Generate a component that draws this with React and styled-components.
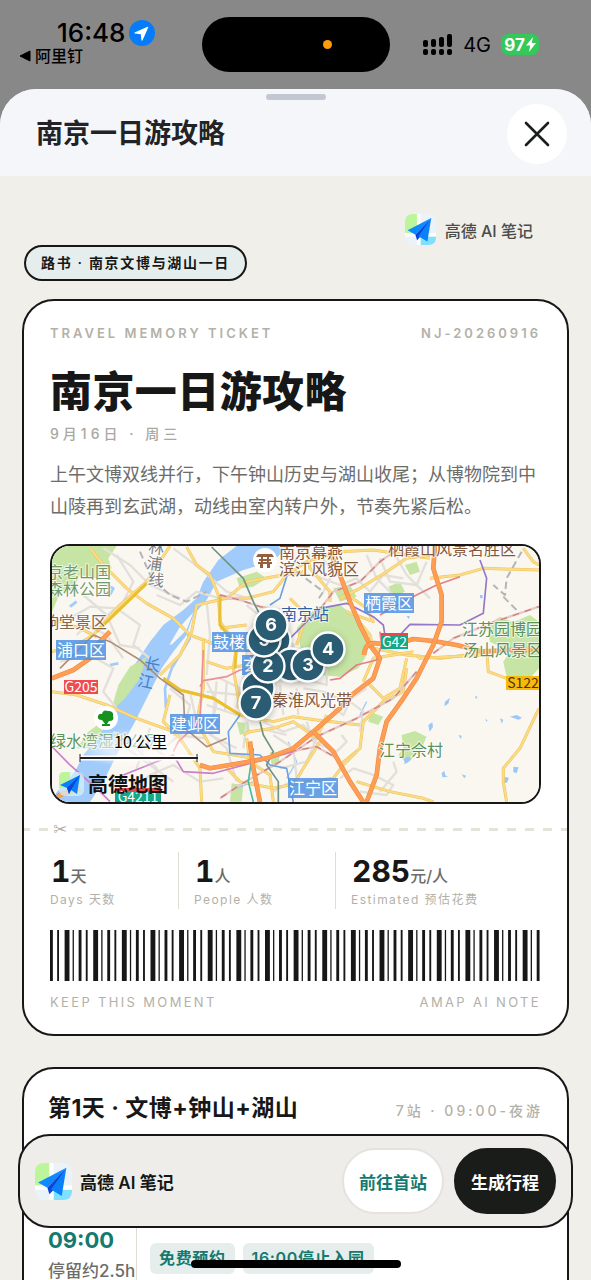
import React from 'react';
import styled, { createGlobalStyle } from 'styled-components';

const stats = [
  { value: '1', unit: '天', label: 'Days 天数' },
  { value: '1', unit: '人', label: 'People 人数' },
  { value: '285', unit: '元/人', label: 'Estimated 预估花费' },
];

export default function App() {
  return (
    <Screen>
      <GlobalStyle />
      <StatusBar />
      <Sheet>
        <SheetHeader>
          <Grabber />
          <SheetTitle>南京一日游攻略</SheetTitle>
          <CloseButton type="button" aria-label="关闭">
            <svg width="28" height="28" viewBox="0 0 28 28">
              <path
                d="M3 3 L25 25 M25 3 L3 25"
                stroke="#1c1d1f"
                strokeWidth="2.6"
                strokeLinecap="round"
              />
            </svg>
          </CloseButton>
        </SheetHeader>
        <Content>
          <BrandRow>
            <Logo size={31} />
            高德 AI 笔记
          </BrandRow>
          <Tag>路书 · 南京文博与湖山一日</Tag>
          <Ticket />
          <DayCard />
        </Content>
      </Sheet>
      <ActionBar>
        <Logo size={37} />
        <ActionName>高德 AI 笔记</ActionName>
        <ActionButton type="button">前往首站</ActionButton>
        <ActionButton type="button" $dark>
          生成行程
        </ActionButton>
      </ActionBar>
      <HomeIndicator />
    </Screen>
  );
}

function StatusBar() {
  return (
    <Status>
      <StatusLeft>
        <Clock>
          16:48
          <svg width="26" height="26" viewBox="0 0 26 26">
            <circle cx="13" cy="13" r="13" fill="#067cfb" />
            <path
              d="M18.6 6.8 L5.6 12.4 Q4.8 13.2 6 13.6 L11.8 14.2 L12.4 20 Q12.9 21.2 13.6 20.2 L19.2 7.4 Q19.3 6.6 18.6 6.8 Z"
              fill="#fff"
            />
          </svg>
        </Clock>
        <BackLink href="#">
          <svg width="12" height="12" viewBox="0 0 12 12">
            <path d="M11 1 V11 L1 6 Z" fill="#000" stroke="#000" strokeLinejoin="round" />
          </svg>
          阿里钉
        </BackLink>
      </StatusLeft>
      <Island>
        <RecordDot />
      </Island>
      <StatusRight>
        <svg width="30" height="21" viewBox="0 0 30 21">
          {[6, 5, 3, 0].map((top, i) => (
            <g key={i}>
              <rect x={i * 8} y={top} width="5" height={13 - top} rx="2" />
              <rect x={i * 8} y="15" width="5" height="6" rx="2" />
            </g>
          ))}
        </svg>
        4G
        <Battery>
          97
          <svg width="10" height="15" viewBox="0 0 10 15">
            <path d="M7 0 L0 8.5 H4.2 L3 15 L10 6 H5.8 Z" fill="#fff" />
          </svg>
        </Battery>
      </StatusRight>
    </Status>
  );
}

function Logo({ size }) {
  return (
    <svg width={size} height={size} viewBox="0 0 36 36" aria-hidden="true">
      <rect width="36" height="36" rx="9" fill="#eaf3f7" />
      <path d="M9 0 H14 V22 H0 V9 Q0 0 9 0 Z" fill="#bdf59b" />
      <path d="M18 26 H36 V27 Q36 36 27 36 H18 Z" fill="#7fe0ff" />
      <path d="M14 0 H18 V36 H14 Z M0 22 H36 V26 H0 Z" fill="#fff" />
      <path d="M30.5 4.5 L3 19 L12 24.2 Z" fill="#0b8bff" />
      <path d="M30.5 4.5 L12 24.2 L14 30.5 L17.5 26.8 Z" fill="#0a45d8" />
      <path d="M30.5 4.5 L15.6 25.8 L26 32 Z" fill="#0a80fb" />
    </svg>
  );
}

function Ticket() {
  return (
    <Card>
      <CapsRow $bold>
        <span>TRAVEL MEMORY TICKET</span>
        <span>NJ-20260916</span>
      </CapsRow>
      <TicketTitle>南京一日游攻略</TicketTitle>
      <TicketDate>9月16日 · 周三</TicketDate>
      <Summary>
        上午文博双线并行，下午钟山历史与湖山收尾；从博物院到中山陵再到玄武湖，动线由室内转户外，节奏先紧后松。
      </Summary>
      <MapFrame>
        <CityMap />
      </MapFrame>
      <TearLine>
        <Scissors>✂</Scissors>
      </TearLine>
      <Stats>
        {stats.map((stat) => (
          <Stat key={stat.label}>
            <StatValue>
              {stat.value}
              <StatUnit>{stat.unit}</StatUnit>
            </StatValue>
            <StatLabel>{stat.label}</StatLabel>
          </Stat>
        ))}
      </Stats>
      <Barcode />
      <CapsRow>
        <span>KEEP THIS MOMENT</span>
        <span>AMAP AI NOTE</span>
      </CapsRow>
    </Card>
  );
}

// every group of four bars repeats after 20 units
function Barcode() {
  const bars = [
    [0, 2],
    [5, 1.3],
    [10.2, 3.4],
    [15.8, 0.9],
  ];
  const groups = Array.from({ length: 18 }, (_, i) => i * 20);

  return (
    <BarcodeSvg viewBox="0 0 343 36" preserveAspectRatio="none">
      {groups.map((start) =>
        bars.map(([x, w]) => (
          <rect key={start + x} x={start + x} width={w} height="36" fill="#161716" />
        ))
      )}
    </BarcodeSvg>
  );
}

function DayCard() {
  return (
    <Card $day>
      <DayHeader>
        <DayTitle>第1天 · 文博+钟山+湖山</DayTitle>
        <DayMeta>7站 · 09:00-夜游</DayMeta>
      </DayHeader>
      <Stop>
        <StopTime>
          <Hour>09:00</Hour>
          <Stay>停留约2.5h</Stay>
        </StopTime>
        <StopBody>
          <Chip>免费预约</Chip>
          <Chip>16:00停止入园</Chip>
        </StopBody>
      </Stop>
    </Card>
  );
}

const parks = [
  'M36 33 H230 L205 70 L215 100 L170 130 L120 120 L100 160 L60 175 L36 230 Z',
  'M770 280 L830 215 L900 210 L940 240 L965 280 L990 330 L975 370 L955 400 L900 425 L840 420 L790 380 Z',
  'M1340 270 L1380 245 L1420 262 L1470 240 L1497 260 V400 L1470 430 L1400 425 L1390 380 L1410 350 L1350 320 Z',
  'M1085 600 L1125 588 L1160 605 L1140 650 L1100 685 L1075 660 L1090 640 Z',
  'M590 130 L650 110 L680 130 L640 155 L600 160 Z',
  'M880 160 L930 150 L950 185 L900 200 Z',
  'M990 530 L1030 545 L1015 570 L985 560 Z',
  'M1045 155 L1080 140 L1095 170 L1060 185 Z',
  'M1095 90 L1130 80 L1140 110 L1110 120 Z',
  'M575 745 L610 750 L605 800 H570 Z',
  'M590 560 L625 565 L630 590 L600 600 Z',
  'M145 590 L185 560 L190 600 L150 640 L110 640 Z',
  'M690 650 L720 655 L715 690 L695 690 Z',
];

const grayRoads = [
  'M90 250 L150 215 L230 220 L300 270 L280 330 L330 370',
  'M190 40 L270 90 L330 150 L420 190',
  'M230 60 L280 140 L250 200 L180 260',
  'M60 380 L150 360 L220 400 L190 470 L230 520',
  'M130 180 L200 240 L240 330 L300 340',
  'M110 300 L140 270 L200 300 L250 370',
  'M350 180 L420 210 L470 170 L540 190',
  'M400 40 L480 100 L560 170 L640 195',
  'M390 460 L450 510 L430 590 L370 640 L300 640',
  'M450 470 L470 560 L560 640 L590 740',
  'M500 440 L530 500 L510 600 L590 640',
  'M540 430 L600 460 L590 520',
  'M560 300 L620 350 L610 440 L650 500',
  'M500 200 L510 300 L500 420',
  'M250 790 L330 720 L400 690 L480 740 L550 730',
  'M220 590 L290 640 L350 700 L340 800',
  'M670 560 L730 590 L790 570 L830 610 L800 680 L720 700',
  'M700 600 L760 640 L770 730 L700 770',
  'M800 560 L820 620 L890 650 L920 620 L905 600',
  'M790 460 L850 470 L920 500 L980 460',
  'M850 500 L910 540 L930 500 L970 530 L960 590',
  'M820 120 L900 150 L950 130 L990 170 L1030 120 L1090 130',
  'M980 60 L1010 130 L1080 200',
  'M1020 70 L1050 140 L1130 150 L1160 80',
  'M1060 50 L1100 120 L1170 190',
  'M840 60 L880 110 L850 170',
  'M900 730 L940 700 L1000 720 L1060 750 L1040 780 L960 770',
  'M1020 770 L1070 710 L1060 680',
  'M780 430 L860 450 L860 400',
  'M620 210 L680 260 L760 330 L760 420',
  'M500 470 L600 480 M500 510 L590 540 M440 540 L530 560 M400 600 L500 610',
  'M530 440 L520 540 M560 440 L555 530 M620 560 L610 640 M660 580 L740 600',
  'M640 470 L740 480 L800 500 M720 450 L730 540 M770 460 L775 540',
  'M300 600 L380 670 M330 580 L290 700 M260 640 L400 740',
];

const yellowRoads = [
  'M36 350 L110 330 L160 300 L235 215 L320 140 L390 33',
  'M150 40 L190 90 L260 160 L320 205 L400 250 L450 300 L530 330',
  'M440 36 L470 90 L510 120 L535 180 L540 260 L590 330 L580 400 L600 520',
  'M36 250 L120 280 L170 305',
  'M360 420 L420 360 L455 290 L470 210 L560 190 L620 140 L700 125 L790 110',
  'M540 190 L620 190 L700 170 L740 120 L800 80 L900 50 L1000 45 L1170 70',
  'M370 430 L420 465 L520 490 L600 540 L700 560 L760 545 L830 555 L960 570',
  'M390 480 L370 560 L420 610 L480 700 L485 800',
  'M490 310 L490 460 L470 560 L520 650 L640 670',
  'M500 380 L560 400 L620 390',
  'M750 190 L800 240 L770 330',
  'M900 190 L960 160 L1040 110 L1100 70 L1170 60',
  'M950 250 L990 300 L1000 340 L1100 360 L1200 370 L1330 355',
  'M980 440 L1030 490 L1080 460 L1100 370',
  'M1100 400 L1090 470 L1030 500 L970 560 L960 640 L900 690',
  'M970 440 L1000 370 L1120 350',
  'M1170 130 L1260 120 L1330 100 L1497 105',
  'M1340 340 L1345 410 L1400 430',
  'M1450 40 L1480 80 L1497 90',
  'M1497 520 L1440 640 L1390 700 L1390 740 L1400 801',
  'M1130 360 L1140 370 L1330 360',
  'M610 600 L630 590 L700 580 L760 560 L830 610 L860 540',
  'M620 610 L630 680 L690 720 L700 800',
  'M560 700 L600 740 L700 760 L800 740 L880 730 L910 690 L950 650',
  'M950 740 L1050 770 L1150 790 L1180 801',
  'M760 750 L790 700 L840 620',
  'M36 470 L110 480 L200 510 L290 550 L400 590',
  'M540 280 L620 270',
  'M920 230 L1000 260 L980 220 L910 170',
  'M800 33 L810 100 L870 170 L870 200',
];

const orangeRoads = [
  'M36 430 L100 405 L150 370 L170 330 L210 290',
  'M36 800 L60 780 L120 760',
  'M480 690 L510 700 L600 685 L680 670 L760 640 L820 590 L900 520 L935 480 L1000 430 L1020 370 L990 330 L960 270 L930 200 L900 120 L870 50',
  'M972 360 Q975 320 1010 325 L1060 330 L1120 312 L1180 318 L1250 330 L1330 350 L1400 345 L1497 345',
  'M1185 33 L1180 100 L1205 180 L1205 260 L1180 330 L1130 430 L1090 490 L1040 560 L1020 640 L1010 720 L980 801',
  'M820 590 L880 650 L930 740 L970 801',
  'M630 620 L640 700 L660 801',
];

const railways = [
  'M820 250 L880 170 L960 140 L1020 80 L1070 45',
  'M1180 355 L1240 310 L1350 265 L1497 215',
  'M1130 410 L1060 490 L950 550 L830 605 L720 680 L600 750 L540 790',
  'M540 180 L600 195 L660 215 L720 225',
  'M750 650 L830 635 L900 675',
];

const metroLines = [
  { color: '#6ea0e4', d: 'M800 33 L770 70 L740 125 L720 190 L690 210' },
  { color: '#6ea0e4', d: 'M600 540 L565 590 L570 655 L660 660 L690 690 L740 700 L760 801' },
  { color: '#6f9486', d: 'M515 36 L610 130 L640 200 L660 240' },
  { color: '#6f9486', d: 'M660 560 L670 600 L700 650 L680 690 L715 740 L715 801' },
  { color: '#ed8f95', d: 'M490 345 L480 560 L415 620 L400 650' },
  { color: '#ed8f95', d: 'M480 455 L490 437 L560 425 L600 405 L640 400' },
  { color: '#e57f86', d: 'M870 435 L900 430 L950 390 L1010 375 L1025 330 L1020 290' },
  { color: '#e57f86', d: 'M1020 240 L1110 190 L1190 150 L1260 125' },
  { color: '#9379c8', d: 'M750 310 L790 270 L840 220 L920 205 L1000 245 L1030 270 L1035 300' },
  { color: '#9379c8', d: 'M1080 300 L1110 268 L1260 270 L1330 235 L1340 130 L1320 75' },
  { color: '#cb7fc9', d: 'M36 635 L90 690 L180 770 L210 800' },
  { color: '#cb7fc9', d: 'M250 720 L400 660 L430 710 L520 715 L650 680 L760 650' },
  { color: '#b08f78', d: 'M60 400 L110 350 L160 300 L210 320 L300 375 L360 430 L430 480 L435 580 L500 635 L560 610' },
  { color: '#45bda6', d: 'M640 640 L625 740 L640 801' },
];

const ponds = [
  'M1215 500 l15 -12 l-5 18 l-12 8 Z',
  'M1165 570 l12 -8 l2 14 l-10 14 Z',
  'M1255 600 l10 2 l-2 10 Z',
  'M1335 553 l8 2 l-3 5 Z',
  'M1380 550 l10 4 l-4 12 Z',
  'M1410 545 l20 -5 l16 8 l-10 6 Z',
  'M1205 715 l8 -8 l3 14 l8 4 l-16 2 Z',
  'M1265 718 l14 4 l-6 8 Z',
  'M1420 695 l16 2 l-6 18 l-10 -4 Z',
  'M1395 725 l12 4 l-6 14 l-10 0 Z',
  'M1305 482 l8 4 l-5 6 Z',
  'M1092 670 l14 -6 l8 10 l-20 14 Z',
  'M1320 180 l8 0 l0 10 l-8 0 Z',
  'M1100 243 l10 0 l-4 10 Z',
];

const places = [
  { text: '京老山国', x: -5, y: 32, color: '#6f9a6a' },
  { text: '森林公园', x: -5, y: 49, color: '#6f9a6a' },
  { text: '响堂景区', x: -9, y: 82, color: '#85664f' },
  { text: '南京幕燕', x: 227, y: 12, color: '#85583c' },
  { text: '滨江风貌区', x: 227, y: 29, color: '#85583c' },
  { text: '栖霞山风景名胜区', x: 336, y: 9, color: '#85583c' },
  { text: '南京站', x: 229, y: 74, color: '#2f62ab' },
  { text: '秦淮风光带', x: 220, y: 160, color: '#85583c' },
  { text: '江苏园博园', x: 410, y: 89, color: '#5d9158' },
  { text: '汤山风景区', x: 411, y: 110, color: '#5d9158' },
  { text: '江宁佘村', x: 327, y: 210, color: '#5d9158' },
  { text: '绿水湾湿地公园', x: -2, y: 201, color: '#5b955c' },
];

const districts = [
  { text: '浦口区', x: 4, y: 94 },
  { text: '鼓楼区', x: 160, y: 86 },
  { text: '玄武区', x: 190, y: 109 },
  { text: '建邺区', x: 118, y: 168 },
  { text: '栖霞区', x: 312, y: 47 },
  { text: '江宁区', x: 236, y: 232 },
];

const shields = [
  { text: 'G205', x: 12, y: 134, w: 34, fill: '#f04b50' },
  { text: 'G42', x: 329, y: 89, w: 27, fill: '#12a888', top: '#e8484b' },
  { text: 'G4211', x: 63, y: 244, w: 46, fill: '#12a888', top: '#e8484b' },
  { text: 'S122', x: 454, y: 130, w: 34, fill: '#f9b90d', ink: '#4c3608' },
];

// last one in the list is drawn on top
const pins = [
  { x: 222, y: 94 },
  { x: 206, y: 142 },
  { x: 239, y: 119 },
  { n: 2, x: 216, y: 120 },
  { n: 5, x: 212, y: 94 },
  { n: 3, x: 256, y: 119 },
  { n: 6, x: 219, y: 79 },
  { n: 4, x: 276, y: 103 },
  { n: 7, x: 204, y: 157 },
];

function Road({ d, color, casing, width }) {
  return (
    <>
      <path d={d} stroke={casing} strokeWidth={width} />
      <path d={d} stroke={color} strokeWidth={width - 3} />
    </>
  );
}

function CityMap() {
  return (
    <MapSvg viewBox="0 0 487 256" preserveAspectRatio="xMidYMid slice">
      <defs>
        <radialGradient id="scaleGlow">
          <stop offset="0.5" stopColor="#fff" stopOpacity="0.6" />
          <stop offset="1" stopColor="#fff" stopOpacity="0" />
        </radialGradient>
      </defs>
      <rect width="487" height="256" fill="#faf7f1" />
      <g transform="translate(-12 -11) scale(0.3333)" fill="none" strokeLinejoin="round">
        <g fill="#c6e5a4">
          {parks.map((d) => (
            <path key={d} d={d} />
          ))}
        </g>
        <path
          d="M590 33 L535 75 L490 140 L470 190 L430 225 L370 270 L330 320 L290 380 L245 450 L220 530 L180 600 L130 660 L105 710 L60 760 L36 790 V801 H150 L190 740 L235 650 L285 560 L330 470 L365 400 L400 350 L440 300 L460 240 L500 195 L530 140 L610 105 L700 78 L745 33 Z"
          fill="#a0cbfb"
        />
        <path d="M388 330 L420 275 L460 232 L440 285 L405 325 Z" fill="#faf7f1" />
        <path d="M212 530 L235 450 L270 395 L320 365 L300 430 L255 490 Z" fill="#c6e5a4" />
        <path d="M400 330 L440 290 L450 310 L395 400 L375 460 L378 520" stroke="#a0cbfb" strokeWidth="8" />
        <path d="M200 150 L220 160 L210 180 M90 215 L110 200 M210 390 L235 385" stroke="#a0cbfb" strokeWidth="8" />
        <path d="M745 620 L770 680 L740 730 M590 760 L640 740 M980 500 L960 540" stroke="#a0cbfb" strokeWidth="4" />
        <g fill="#9cc7fa">
          {ponds.map((d) => (
            <path key={d} d={d} />
          ))}
        </g>
        {grayRoads.map((d) => (
          <path key={d} d={d} stroke="#e3dfdb" strokeWidth="7" />
        ))}
        {yellowRoads.map((d) => (
          <Road key={d} d={d} color="#fbdc85" casing="#eec25c" width={9} />
        ))}
        <path d="M540 180 V270 L590 330 L585 400 M370 430 L420 465 L520 490 L600 540 M170 290 L320 145" stroke="#ebc030" strokeWidth="9" />
        {railways.map((d) => (
          <g key={d}>
            <path d={d} stroke="#e6c9c6" strokeWidth="7" />
            <path d={d} stroke="#d27e80" strokeWidth="4" strokeDasharray="20 18" />
          </g>
        ))}
        <g stroke="#b3b5b8" strokeWidth="6" strokeDasharray="22 12">
          <path d="M300 50 L335 130 L390 180 L440 200 L500 170" />
          <path d="M1445 50 L1400 130 L1395 180 L1360 150 M1390 185 L1430 225" />
          <path d="M770 110 L850 170 L830 200" />
        </g>
        {metroLines.map(({ color, d }) => (
          <path key={d} d={d} stroke={color} strokeWidth="5" />
        ))}
        {orangeRoads.map((d) => (
          <Road key={d} d={d} color="#fd9e54" casing="#ef8440" width={14} />
        ))}
      </g>

      {places.map(({ text, x, y, color }) => (
        <MapText key={text} x={x} y={y} fill={color} $halo>
          {text}
        </MapText>
      ))}
      <MapText x="94" y="7" fill="#7c8085" transform="rotate(8 100 20)" $halo>
        <tspan x="94">林</tspan>
        <tspan x="94" dy="16">浦</tspan>
        <tspan x="98" dy="16">线</tspan>
      </MapText>
      <MapText x="91" y="124" fill="#4b7fc4" transform="rotate(12 98 125)">
        <tspan x="91">长</tspan>
        <tspan x="88" dy="18">江</tspan>
      </MapText>
      {districts.map(({ text, x, y }) => (
        <g key={text}>
          <rect x={x} y={y} width="50" height="20" fill="#4d92e4" opacity="0.85" />
          <MapText x={x + 1} y={y + 16} fill="#fff">
            {text}
          </MapText>
        </g>
      ))}
      {shields.map(({ text, x, y, w, fill, top, ink }) => (
        <g key={text}>
          <rect x={x} y={y} width={w} height="14" fill={fill} />
          {top && <rect x={x} y={y - 2} width={w} height="3" fill={top} />}
          <MapText x={x + w / 2} y={y + 12} fill={ink || '#fff'} textAnchor="middle" $small>
            {text}
          </MapText>
        </g>
      ))}

      <circle cx="213" cy="14" r="12" fill="#fff" />
      <path
        d="M206 8 H220 L222 11 H204 Z M207 13 H219 V15 H207 Z M206 16 H220 V18 H206 Z M208 18 H211 V22 H208 Z M215 18 H218 V22 H215 Z M209 11 H211 V16 H209 Z M215 11 H217 V16 H215 Z"
        fill="#96603f"
      />
      <circle cx="54" cy="172" r="12" fill="#fff" />
      <path
        d="M50 174 Q45 174 46 170 Q47 167 50 168 Q51 163 56 165 Q62 165 61 170 Q63 175 57 175 L55 178 H58 V180 H50 V178 H53 Z"
        fill="#16911d"
      />

      {pins.map(({ n, x, y }) => (
        <Pin key={`${x}-${y}`}>
          <circle cx={x} cy={y} r="16.5" fill="#2a5d74" stroke="#fff" strokeWidth="2.4" />
          {n && (
            <text x={x} y={y + 6} textAnchor="middle">
              {n}
            </text>
          )}
        </Pin>
      ))}

      <ellipse cx="87" cy="202" rx="66" ry="20" fill="url(#scaleGlow)" />
      <MapText x="62" y="202" fill="#000" $halo>
        10 公里
      </MapText>
      <path d="M28 212 H146" stroke="#fff" strokeWidth="5" />
      <path d="M28 212 H146" stroke="#222" strokeWidth="2" />
      <path d="M28 208 V216 M145 208 V216" stroke="#222" />
      <rect x="7" y="226" width="25" height="24" rx="6" fill="#d5f3f5" opacity="0.7" />
      <path d="M12 226 H18 V242 H7 V231 Q7 226 12 226 Z" fill="#bdf59b" />
      <path d="M28 229 L8 239 L15 242 L17 248 L19 244 L25 248 Z" fill="#0b80fb" />
      <path d="M28 229 L15 242 L17 248 L19 244 Z" fill="#0a45d8" />
      <MapBrand x="36" y="246">
        高德地图
      </MapBrand>
    </MapSvg>
  );
}

const GlobalStyle = createGlobalStyle`
  * {
    box-sizing: border-box;
  }

  body {
    margin: 0;
    background: #888;
    color: #161716;
    font-family: Inter, 'Noto Sans CJK SC', sans-serif;
  }

  button {
    font-family: inherit;
    padding: 0;
    cursor: pointer;
  }
`;

const Screen = styled.div`
  position: relative;
  height: 100vh;
  display: flex;
  flex-direction: column;
  overflow: hidden;
  background: #888;
`;

const Status = styled.header`
  flex: none;
  height: 89px;
  padding: 17px 52px 0 19px;
  display: grid;
  grid-template-columns: 1fr 188px 1fr;
  color: #000;
`;

const StatusLeft = styled.div`
  display: flex;
  flex-direction: column;
`;

const Clock = styled.div`
  display: flex;
  align-items: center;
  gap: 4px;
  padding-left: 38px;
  font-size: 26px;
  font-weight: 500;
  line-height: 32px;
`;

const BackLink = styled.a`
  display: flex;
  align-items: center;
  gap: 4px;
  color: inherit;
  font-size: 16px;
  font-weight: 500;
  line-height: 14px;
  text-decoration: none;
`;

const Island = styled.div`
  height: 55px;
  margin-left: 17px;
  margin-right: -17px;
  border-radius: 28px;
  background: #000;
  display: flex;
  align-items: center;
  justify-content: flex-end;
  padding-right: 58px;
`;

const RecordDot = styled.span`
  width: 9px;
  height: 9px;
  border-radius: 50%;
  background: #ff9a0a;
`;

const StatusRight = styled.div`
  display: flex;
  align-items: center;
  justify-content: flex-end;
  gap: 10px;
  height: 55px;
  font-size: 20px;
`;

const Battery = styled.span`
  display: flex;
  align-items: center;
  justify-content: center;
  gap: 1px;
  width: 38px;
  height: 21px;
  border-radius: 7px;
  background: #34c759;
  color: #fff;
  font-size: 17px;
  font-weight: 700;
`;

const Sheet = styled.main`
  flex: 1;
  min-height: 0;
  display: flex;
  flex-direction: column;
  border-radius: 36px 36px 0 0;
  background: #f0efea;
  overflow: hidden;
`;

const SheetHeader = styled.div`
  position: relative;
  flex: none;
  display: flex;
  align-items: center;
  justify-content: space-between;
  height: 87px;
  padding: 3px 24px 0 36px;
  background: #f5f6f9;
`;

const Grabber = styled.span`
  position: absolute;
  top: 5px;
  left: 50%;
  width: 60px;
  height: 6px;
  margin-left: -30px;
  border-radius: 3px;
  background: #c3c7d2;
`;

const SheetTitle = styled.h1`
  margin: 0;
  color: #222325;
  font-size: 27px;
  font-weight: 600;
  line-height: 36px;
`;

const CloseButton = styled.button`
  display: flex;
  align-items: center;
  justify-content: center;
  width: 60px;
  height: 60px;
  border: 0;
  border-radius: 50%;
  background: #fff;
`;

const Content = styled.div`
  flex: 1;
  min-height: 0;
  padding: 38px 22px 0;
  overflow-y: auto;
  scrollbar-width: none;
`;

const BrandRow = styled.div`
  display: flex;
  align-items: center;
  justify-content: flex-end;
  gap: 9px;
  height: 31px;
  padding-right: 36px;
  color: #4c4d4a;
  font-size: 16px;
  font-weight: 500;
`;

const Tag = styled.div`
  width: fit-content;
  margin-left: 2px;
  padding: 0 15px;
  border: 2px solid #161716;
  border-radius: 18px;
  background: #e5eeec;
  font-size: 14px;
  font-weight: 600;
  letter-spacing: 0.12em;
  line-height: 32px;
`;

const Card = styled.section`
  margin-top: ${(props) => (props.$day ? '31px' : '18px')};
  padding: ${(props) => (props.$day ? '22px 24px 60px' : '24px 26px')};
  border: 2px solid #161716;
  border-radius: 32px;
  background: #fff;
`;

const CapsRow = styled.div`
  display: flex;
  justify-content: space-between;
  color: #b3b1a7;
  font-size: 13px;
  font-weight: ${(props) => (props.$bold ? 600 : 400)};
  letter-spacing: ${(props) => (props.$bold ? '3px' : '0.18em')};
  line-height: 16px;
`;

const TicketTitle = styled.h2`
  margin: 25px 0 0;
  font-size: 42px;
  font-weight: 900;
  letter-spacing: 0.01em;
  line-height: 52px;
`;

const TicketDate = styled.p`
  margin: 6px 0 0;
  color: #aaa89f;
  font-size: 14px;
  font-weight: 500;
  letter-spacing: 4px;
  line-height: 20px;
`;

const Summary = styled.p`
  margin: 15px 0 21px;
  color: #6d6c69;
  font-size: 18px;
  line-height: 32px;
`;

const MapFrame = styled.div`
  border: 2px solid #161716;
  border-radius: 20px;
  overflow: hidden;
`;

const MapSvg = styled.svg`
  display: block;
  width: 100%;
`;

const MapText = styled.text`
  font-family: 'Noto Sans CJK SC', sans-serif;
  font-size: ${(props) => (props.$small ? '14px' : '16px')};
  paint-order: stroke;
  stroke: ${(props) => (props.$halo ? 'rgba(255, 255, 255, 0.7)' : 'none')};
  stroke-width: 2px;
`;

const MapBrand = styled.text`
  font-size: 20px;
  font-weight: 700;
  fill: #111;
`;

const Pin = styled.g`
  filter: drop-shadow(0 2px 3px rgba(0, 0, 0, 0.25));

  text {
    font-size: 18px;
    font-weight: 700;
    fill: #fff;
  }
`;

const TearLine = styled.div`
  display: flex;
  align-items: center;
  height: 18px;
  margin: 16px -26px 0;
  padding-left: 26px;
  background: repeating-linear-gradient(90deg, #e4e2db 0 9px, transparent 9px 18px) -3px
    8px / 100% 3px repeat-x;
`;

const Scissors = styled.span`
  padding: 0 3px;
  background: #fff;
  color: #b3b1a7;
  font-family: 'DejaVu Sans', sans-serif;
  font-size: 17px;
  line-height: 18px;
`;

const Stats = styled.div`
  display: grid;
  grid-template-columns: 128px 157px 1fr;
  margin-top: 14px;
`;

const Stat = styled.div`
  padding-left: 15px;
  border-left: 1px solid #dedcd5;

  &:first-child {
    padding-left: 0;
    border-left: 0;
  }
`;

const StatValue = styled.div`
  padding-left: 1px;
  font-size: 30px;
  font-weight: 700;
  font-variant-numeric: tabular-nums;
  line-height: 38px;
`;

const StatUnit = styled.span`
  color: #6d6c69;
  font-size: 16px;
  font-weight: 500;
  line-height: 16px;
`;

const StatLabel = styled.div`
  color: #b3b1a7;
  font-size: 12px;
  letter-spacing: 0.12em;
  line-height: 19px;
`;

const BarcodeSvg = styled.svg`
  display: block;
  width: 100%;
  height: 51px;
  margin: 21px 0 13px;
`;

const DayHeader = styled.div`
  display: flex;
  align-items: center;
  justify-content: space-between;
`;

const DayTitle = styled.h2`
  margin: 0;
  font-size: 23px;
  font-weight: 700;
  letter-spacing: 0.02em;
  line-height: 34px;
`;

const DayMeta = styled.span`
  padding-top: 4px;
  color: #b3b1a7;
  font-size: 14px;
  font-weight: 500;
  letter-spacing: 3px;
`;

const Stop = styled.div`
  display: flex;
  margin-top: 80px;
`;

const StopTime = styled.div`
  width: 88px;
  padding-top: 20px;
  white-space: nowrap;
`;

const Hour = styled.div`
  color: #147a6f;
  font-size: 22px;
  font-weight: 700;
  line-height: 30px;
`;

const Stay = styled.div`
  margin-top: 2px;
  color: #6d6c69;
  font-size: 17px;
  font-weight: 500;
  line-height: 28px;
`;

const StopBody = styled.div`
  display: flex;
  align-items: flex-start;
  gap: 8px;
  padding: 38px 0 40px 13px;
  border-left: 1px solid #dedcd5;
`;

const Chip = styled.span`
  padding: 0 9px;
  border-radius: 6px;
  background: #e5eeec;
  color: #147a6f;
  font-size: 16px;
  font-weight: 600;
  letter-spacing: 0.04em;
  line-height: 31px;
`;

const ActionBar = styled.nav`
  position: absolute;
  left: 18px;
  right: 18px;
  bottom: 52px;
  height: 94px;
  display: flex;
  align-items: center;
  padding: 0 15px;
  border: 2px solid #161716;
  border-radius: 32px;
  background: #eeede9;
`;

const ActionName = styled.strong`
  flex: 1;
  margin-left: 8px;
  font-size: 17px;
  font-weight: 600;
`;

const ActionButton = styled.button`
  width: 102px;
  height: 66px;
  margin-left: 10px;
  border: 2px solid ${(props) => (props.$dark ? '#1a1c1a' : '#e6e2de')};
  border-radius: 33px;
  background: ${(props) => (props.$dark ? '#1a1c1a' : '#fff')};
  color: ${(props) => (props.$dark ? '#fff' : '#147a6f')};
  font-size: 17px;
  font-weight: 700;
`;

const HomeIndicator = styled.div`
  position: absolute;
  bottom: 12px;
  left: 50%;
  width: 210px;
  height: 8px;
  margin-left: -105px;
  border-radius: 4px;
  background: #000;
`;
